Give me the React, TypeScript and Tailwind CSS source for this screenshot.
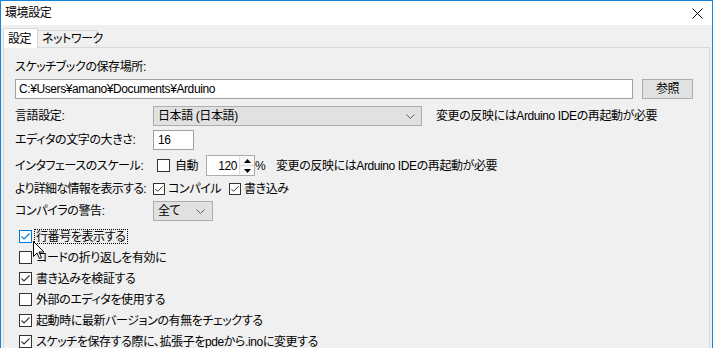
import React from 'react';

// Windows-style preferences dialog (Arduino IDE, Japanese)

function CheckBox({ checked, focus, size = 13 }: { checked?: boolean; focus?: boolean; size?: number }) {
  const color = focus ? '#0078d7' : '#333333';
  return (
    <div
      className="bg-white border shrink-0 flex items-center justify-center"
      style={{ width: size, height: size, borderColor: color }}
    >
      {checked && (
        <svg width={size - 2} height={size - 2} viewBox="0 0 11 11">
          <polyline points="1.5,5.5 4,8 9.5,2.5" fill="none" stroke={color} strokeWidth="1.1" />
        </svg>
      )}
    </div>
  );
}

function Chevron() {
  return (
    <svg width="9" height="5" viewBox="0 0 9 5">
      <polyline points="0.5,0.5 4.5,4.5 8.5,0.5" fill="none" stroke="#606060" strokeWidth="1" />
    </svg>
  );
}

const note = '変更の反映にはArduino IDEの再起動が必要';

const options = [
  { label: '行番号を表示する', checked: true, focus: true },
  { label: 'コードの折り返しを有効に', checked: false },
  { label: '書き込みを検証する', checked: true },
  { label: '外部のエディタを使用する', checked: false },
  { label: '起動時に最新バージョンの有無をチェックする', checked: true },
  { label: 'スケッチを保存する際に、拡張子をpdeから.inoに変更する', checked: true },
];

export default function App() {
  return (
    <div className="relative w-[713px] h-[348px] overflow-hidden flex flex-col bg-[#f0f0f0] border-x border-t border-[#1883d7] text-[12px] leading-none whitespace-nowrap tracking-[-0.4px] text-black font-['Liberation_Sans','Noto_Sans_CJK_JP',sans-serif] [font-feature-settings:'palt']">
      {/* title bar */}
      <div className="h-[24px] shrink-0 bg-white flex items-center justify-between pl-[4px] pr-[9px]">
        <span className="text-[12px]">環境設定</span>
        <svg width="11" height="11" viewBox="0 0 11 11">
          <path d="M0.5 0.5 L10.5 10.5 M10.5 0.5 L0.5 10.5" stroke="#000" strokeWidth="1" />
        </svg>
      </div>

      {/* tabs */}
      <div className="h-[22px] shrink-0 flex items-end pl-[2px]">
        <div className="relative z-10 w-[35px] h-[20px] -mb-px bg-white border-x border-t border-[#d9d9d9] flex items-center pl-[4px]">
          設定
        </div>
        <div className="w-[59px] h-[17px] bg-[#f0f0f0] border-r border-t border-[#d9d9d9] flex items-center pl-[4px]">
          ネットワーク
        </div>
      </div>

      {/* panel */}
      <div className="flex-1 mx-[2px] border border-[#d9d9d9] bg-[#f0f0f0] pl-[11px] pt-[9px] flex flex-col">
        <div className="h-[20px] flex items-center">スケッチブックの保存場所:</div>

        <div className="h-[20px] mt-[2px] flex items-center">
          <div className="w-[618px] h-[20px] bg-white border border-[#a0a0a0] flex items-center pl-[3px]">
            C:¥Users¥amano¥Documents¥Arduino
          </div>
          <button className="ml-[9px] w-[51px] h-[20px] bg-[#e1e1e1] border border-[#adadad] flex items-center justify-center">
            参照
          </button>
        </div>

        <div className="h-[20px] mt-[7px] flex items-center">
          <div className="w-[138px] shrink-0">言語設定:</div>
          <div className="w-[269px] h-[20px] bg-[#e1e1e1] border border-[#adadad] flex items-center justify-between pl-[4px] pr-[6px]">
            <span>日本語 (日本語)</span>
            <Chevron />
          </div>
          <span className="ml-[14px]">{note}</span>
        </div>

        <div className="h-[20px] mt-[4px] flex items-center">
          <div className="w-[138px] shrink-0">エディタの文字の大きさ:</div>
          <div className="w-[41px] h-[20px] bg-white border border-[#a0a0a0] flex items-center pl-[4px]">16</div>
        </div>

        <div className="h-[21px] mt-[5px] flex items-center">
          <div className="w-[138px] shrink-0">インタフェースのスケール:</div>
          <div className="w-[53px] flex items-center pl-[4px]">
            <CheckBox />
            <span className="ml-[5px]">自動</span>
          </div>
          <div className="w-[49px] h-[21px] bg-white border border-[#adadad] flex items-stretch">
            <div className="flex-1 flex items-center justify-end pr-[2px]">120</div>
            <div className="w-[15px] flex flex-col border-l border-[#dcdcdc] bg-[#f7f7f7]">
              <div className="flex-1 flex items-center justify-center border-b border-[#dcdcdc]">
                <svg width="7" height="4" viewBox="0 0 7 4"><polygon points="0,4 3.5,0 7,4" fill="#000" /></svg>
              </div>
              <div className="flex-1 flex items-center justify-center">
                <svg width="7" height="4" viewBox="0 0 7 4"><polygon points="0,0 7,0 3.5,4" fill="#000" /></svg>
              </div>
            </div>
          </div>
          <span className="w-[21px]">%</span>
          <span>{note}</span>
        </div>

        <div className="h-[20px] mt-[3px] flex items-center">
          <div className="w-[138px] shrink-0 tracking-[-0.7px]">より詳細な情報を表示する:</div>
          <div className="w-[76px] flex items-center">
            <CheckBox checked size={12} />
            <span className="ml-[3px]">コンパイル</span>
          </div>
          <CheckBox checked size={12} />
          <span className="ml-[3px]">書き込み</span>
        </div>

        <div className="h-[20px] mt-[2px] flex items-center">
          <div className="w-[138px] shrink-0">コンパイラの警告:</div>
          <div className="w-[60px] h-[20px] bg-[#e1e1e1] border border-[#adadad] flex items-center justify-between pl-[4px] pr-[7px]">
            <span>全て</span>
            <Chevron />
          </div>
        </div>

        <div className="mt-[5px] flex flex-col">
          {options.map((o) => (
            <div key={o.label} className="h-[21px] flex items-center pl-[4px]">
              <CheckBox checked={o.checked} focus={o.focus} />
              <span
                className={
                  'ml-[2px] h-[15px] flex items-center px-px border ' +
                  (o.focus ? 'border-dotted border-black' : 'border-transparent')
                }
              >
                {o.label}
              </span>
            </div>
          ))}
        </div>
      </div>

      {/* mouse pointer */}
      <svg className="absolute left-[32px] top-[240px]" width="12" height="19" viewBox="0 0 12 19">
        <path d="M0.5 0.5 L0.5 15.5 L4 12 L6.5 17.5 L8.5 16.5 L6 11 L11 11 Z" fill="#fff" stroke="#000" strokeWidth="1" />
      </svg>
    </div>
  );
}
